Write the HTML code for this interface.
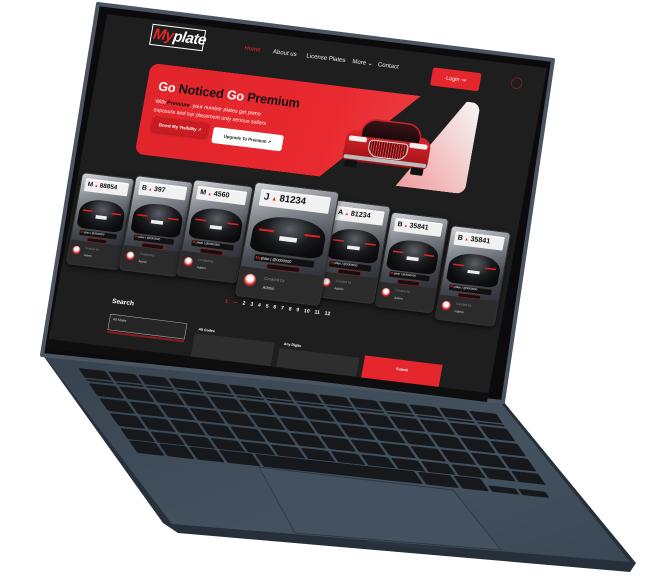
<!DOCTYPE html>
<html><head><meta charset="utf-8"><style>
html,body{margin:0;padding:0;background:#fff;}
body{width:657px;height:581px;position:relative;overflow:hidden;font-family:"Liberation Sans",sans-serif;}
svg.base{position:absolute;left:0;top:0}
.scr{position:absolute;left:0;top:0;width:880px;height:668px;transform-origin:0 0;transform:matrix(0.5,0.0614,-0.0898,0.5,107,14);background:#1e1e1f;overflow:hidden;color:#fff}
.abs{position:absolute}
.logo{left:93px;top:8px;width:100px;height:38px;border:2px solid #fff;font:italic bold 30px/36px "Liberation Sans",sans-serif;padding-left:3px;letter-spacing:-1px}
.nav{top:26px;font-size:12px;color:#eee}
.login{left:657px;top:26px;width:97px;height:36px;background:#e5262c;border-radius:5px;font-size:11px;text-align:center;line-height:36px}
.hero{left:103px;top:85px;width:660px;height:182px;border-radius:18px;overflow:hidden}
.red{position:absolute;inset:0;background:linear-gradient(100deg,#e1252b 0%,#e8292f 55%,#f04a4e 100%);clip-path:polygon(0 0,540px 0,370px 100%,0 100%)}
.light{position:absolute;inset:0;background:linear-gradient(225deg,#f6f6f6 0%,#f1a3a5 35%,#e3262c 80%);clip-path:polygon(632px 0,660px 0,660px 100%,522px 100%)}
.h1{left:23px;top:30px;font:bold 25px "Liberation Sans",sans-serif;white-space:nowrap;letter-spacing:-.3px}
.sub{left:22px;top:66px;font-size:10.5px;line-height:17px;color:#fff;white-space:nowrap}
.b1{left:24px;top:104px;width:112px;height:30px;background:#c81c22;border-radius:5px;font:bold 8.5px/30px "Liberation Sans",sans-serif;text-align:center;box-shadow:0 2px 5px rgba(0,0,0,.3)}
.b2{left:146px;top:110px;width:140px;height:32px;background:#fff;color:#111;border-radius:5px;font:bold 8.5px/32px "Liberation Sans",sans-serif;text-align:center}
.card{position:absolute;border-radius:9px;background:#2b2b2c;overflow:hidden;box-shadow:0 4px 10px rgba(0,0,0,.6);border:2px solid #333}
.card .t{position:absolute;left:0;right:0;top:0;height:74%;background:linear-gradient(160deg,#d0d3d6 0%,#8b9096 30%,#454a50 70%,#30343a 100%)}
.pl{position:absolute;left:8%;right:8%;top:5%;height:13%;background:#f1f1f1;border-top:3px solid #fff;color:#111;font-weight:bold;font-size:1.35em;line-height:1.3em;padding-left:.4em;white-space:nowrap;overflow:hidden;border-radius:2px}
.pl i{color:#e22;font-style:normal;font-size:.6em;margin:0 .4em}
.car{position:absolute;left:6%;right:6%;top:27%;height:33%;background:radial-gradient(ellipse at 50% 30%,#5a5f66 0%,#1a1b1e 45%,#0b0b0c 75%);border-radius:45% 45% 18% 18%}
.car:before{content:"";position:absolute;left:8%;right:8%;top:38%;height:5%;background:linear-gradient(90deg,#d22 0,#d22 25%,transparent 25%,transparent 75%,#d22 75%);}
.car:after{content:"";position:absolute;left:38%;right:38%;top:52%;height:11%;background:#eee}
.bar{position:absolute;left:14%;right:14%;top:62%;height:6%;background:#111;border-radius:2px;font-size:.55em;line-height:1.7em;color:#fff;padding-left:.3em;white-space:nowrap;overflow:hidden}
.bar b{color:#e22}
.pill{position:absolute;left:30%;right:30%;top:69.5%;height:3.5%;background:#111;border:1px solid #a11;border-radius:4px}
.av{position:absolute;left:6%;top:80%;width:1.7em;height:1.7em;border-radius:50%;background:radial-gradient(circle at 50% 40%,#fff 0,#eee 35%,#d22 60%)}
.cb{position:absolute;left:30%;top:80%;font-size:.6em;color:#888;white-space:nowrap}
.ad{position:absolute;left:30%;top:88%;font-size:.6em;color:#ddd}
.pg{left:332px;top:528px;font-size:10px;font-weight:bold;word-spacing:7px;white-space:nowrap}
</style></head><body>
<svg class="base" width="657" height="581" viewBox="0 0 657 581">
<defs>
<linearGradient id="bg" x1="0" y1="0" x2="1" y2="1"><stop offset="0" stop-color="#37434f"/><stop offset=".6" stop-color="#44525f"/><stop offset="1" stop-color="#3a4754"/></linearGradient>
<pattern id="key" patternUnits="userSpaceOnUse" width="100" height="100"><rect x="5" y="6" width="90" height="86" rx="8" fill="#16181b"/></pattern>
</defs>
<polygon points="42,354 503,401 636,563 630,572 178,533 163,523" fill="#27303a"/>
<polygon points="45,357 501,403 630,562 172,524" fill="url(#bg)"/>
<polygon points="259,467 453,490 501,550 295,533" fill="#435160" stroke="#2f3a46" stroke-width="1"/>
<polygon points="366,540 449,548 448,551 366,543" fill="#2b3540"/>
<g transform="matrix(0.3007,0.03286,0.105,0.15,76,367)">
<rect x="0" y="0" width="1400" height="70" fill="url(#key)"/>
<rect x="0" y="80" width="1400" height="400" fill="url(#key)"/>
<rect x="5" y="486" width="90" height="86" rx="8" fill="#16181b"/>
<rect x="105" y="486" width="90" height="86" rx="8" fill="#16181b"/>
<rect x="205" y="486" width="90" height="86" rx="8" fill="#16181b"/>
<rect x="305" y="486" width="110" height="86" rx="8" fill="#16181b"/>
<rect x="425" y="486" width="530" height="86" rx="8" fill="#16181b"/>
<rect x="965" y="486" width="110" height="86" rx="8" fill="#16181b"/>
<rect x="1085" y="486" width="90" height="86" rx="8" fill="#16181b"/>
<rect x="1185" y="530" width="90" height="42" rx="6" fill="#16181b"/>
<rect x="1285" y="530" width="90" height="42" rx="6" fill="#16181b"/>
</g>
<polygon points="98,4 553,60 503,402 42,355" fill="#0b0b0d" stroke="#4b5562" stroke-width="4" stroke-linejoin="round"/>
</svg>
<div class="scr">
<div class="abs logo"><span style="color:#e5262c">My</span>plate</div>
<div class="abs nav" style="left:281px;color:#e5262c">Home</div>
<div class="abs nav" style="left:338px">About us</div>
<div class="abs nav" style="left:405px">License Plates</div>
<div class="abs nav" style="left:497px">More ⌄</div>
<div class="abs nav" style="left:548px">Contact</div>
<div class="abs login">Login ⇥</div>
<div class="abs" style="left:815px;top:26px;width:20px;height:20px;border:1px solid #a22;border-radius:50%"></div>
<div class="abs hero">
<div class="red"></div><div class="light"></div>
<div class="abs h1"><span>Go </span><span style="color:#111">Noticed </span><span>Go </span><span style="color:#111">Premium</span></div>
<div class="abs sub">With <b style="color:#111">Premium</b>, your number plates get prime<br>exposure and top placement only serious sellers</div>
<div class="abs b1">Boost My Visibility ↗</div>
<div class="abs b2">Upgrade To Premium ↗</div>
<div class="abs" style="left:400px;top:52px;width:185px;height:105px">
 <div class="abs" style="left:8px;top:30px;width:169px;height:62px;background:linear-gradient(#d8262c,#9d1015);border-radius:20px 20px 10px 10px"></div>
 <div class="abs" style="left:35px;top:4px;width:115px;height:34px;background:linear-gradient(#3a1315,#1a0a0b);border-radius:30px 30px 4px 4px;border:3px solid #c92228"></div>
 <div class="abs" style="left:55px;top:45px;width:75px;height:30px;background:repeating-linear-gradient(90deg,#5a0a0d 0 3px,#e04040 3px 5px);border-radius:8px 8px 20px 20px;border:2px solid #ddd"></div>
 <div class="abs" style="left:14px;top:42px;width:36px;height:10px;background:#eee;border-radius:4px"></div>
 <div class="abs" style="left:135px;top:42px;width:36px;height:10px;background:#eee;border-radius:4px"></div>
 <div class="abs" style="left:10px;top:80px;width:165px;height:8px;background:#bbb;border-radius:3px"></div>
 <div class="abs" style="left:14px;top:90px;width:25px;height:14px;background:#111;border-radius:3px"></div>
 <div class="abs" style="left:146px;top:90px;width:25px;height:14px;background:#111;border-radius:3px"></div>
</div>
</div>

<div class="card" style="left:7px;top:315px;width:102px;height:180px;font-size:9.3px;z-index:1"><div class="t"></div><div class="pl">M<i>▲</i>88854</div><div class="car"></div><div class="bar"><b>My</b>plate | @0000000</div><div class="pill"></div><div class="av"></div><div class="cb">Created by</div><div class="ad">Admin</div></div>
<div class="card" style="left:113px;top:308px;width:112px;height:186px;font-size:10px;z-index:2"><div class="t"></div><div class="pl">B<i>▲</i>397</div><div class="car"></div><div class="bar"><b>My</b>plate | @0000000</div><div class="pill"></div><div class="av"></div><div class="cb">Created by</div><div class="ad">Admin</div></div>
<div class="card" style="left:228px;top:302px;width:116px;height:190px;font-size:10.5px;z-index:3"><div class="t"></div><div class="pl">M<i>▲</i>4560</div><div class="car"></div><div class="bar"><b>My</b>plate | @0000000</div><div class="pill"></div><div class="av"></div><div class="cb">Created by</div><div class="ad">Admin</div></div>
<div class="card" style="left:505px;top:308px;width:115px;height:192px;font-size:10.5px;z-index:3"><div class="t"></div><div class="pl">A<i>▲</i>81234</div><div class="car"></div><div class="bar"><b>My</b>plate | @0000000</div><div class="pill"></div><div class="av"></div><div class="cb">Created by</div><div class="ad">Admin</div></div>
<div class="card" style="left:626px;top:318px;width:112px;height:186px;font-size:10px;z-index:2"><div class="t"></div><div class="pl">B<i>▲</i>35841</div><div class="car"></div><div class="bar"><b>My</b>plate | @0000000</div><div class="pill"></div><div class="av"></div><div class="cb">Created by</div><div class="ad">Admin</div></div>
<div class="card" style="left:748px;top:330px;width:116px;height:185px;font-size:10.5px;z-index:1"><div class="t"></div><div class="pl">B<i>▲</i>35841</div><div class="car"></div><div class="bar"><b>My</b>plate | @0000000</div><div class="pill"></div><div class="av"></div><div class="cb">Created by</div><div class="ad">Admin</div></div>
<div class="card" style="left:349px;top:292px;width:165px;height:225px;font-size:14px;z-index:5"><div class="t"></div><div class="pl">J<i>▲</i>81234</div><div class="car"></div><div class="bar"><b>My</b>plate | @0000000</div><div class="pill"></div><div class="av"></div><div class="cb">Created by</div><div class="ad">Admin</div></div>

<div class="abs" style="left:111px;top:552px;font-size:13px;font-weight:bold">Search</div>
<div class="abs pg"><span style="color:#e5262c">1 —</span> 2 3 4 5 6 7 8 9 10 11 12</div>
<div class="abs" style="left:112px;top:586px;width:154px;height:32px;border:1.5px solid #bbb;background:#262627;font-size:7px;color:#ccc;padding:6px;box-sizing:border-box">All Make</div>
<div class="abs" style="left:112px;top:620px;width:154px;height:4px;background:#8a1a1e"></div>
<div class="abs" style="left:290px;top:592px;font-size:7px;font-weight:bold">All Codes</div>
<div class="abs" style="left:284px;top:603px;width:160px;height:50px;background:#2e2e2f"></div>
<div class="abs" style="left:462px;top:600px;font-size:7px;font-weight:bold">Any Digits</div>
<div class="abs" style="left:455px;top:612px;width:160px;height:45px;background:#2e2e2f"></div>
<div class="abs" style="left:625px;top:606px;width:155px;height:45px;background:#e5262c;font-size:7px;font-weight:bold;text-align:center;line-height:40px">Submit</div>
<div class="abs" style="left:0;top:650px;width:880px;height:20px;background:#0e0e0f"></div>
</div>
</body></html>
